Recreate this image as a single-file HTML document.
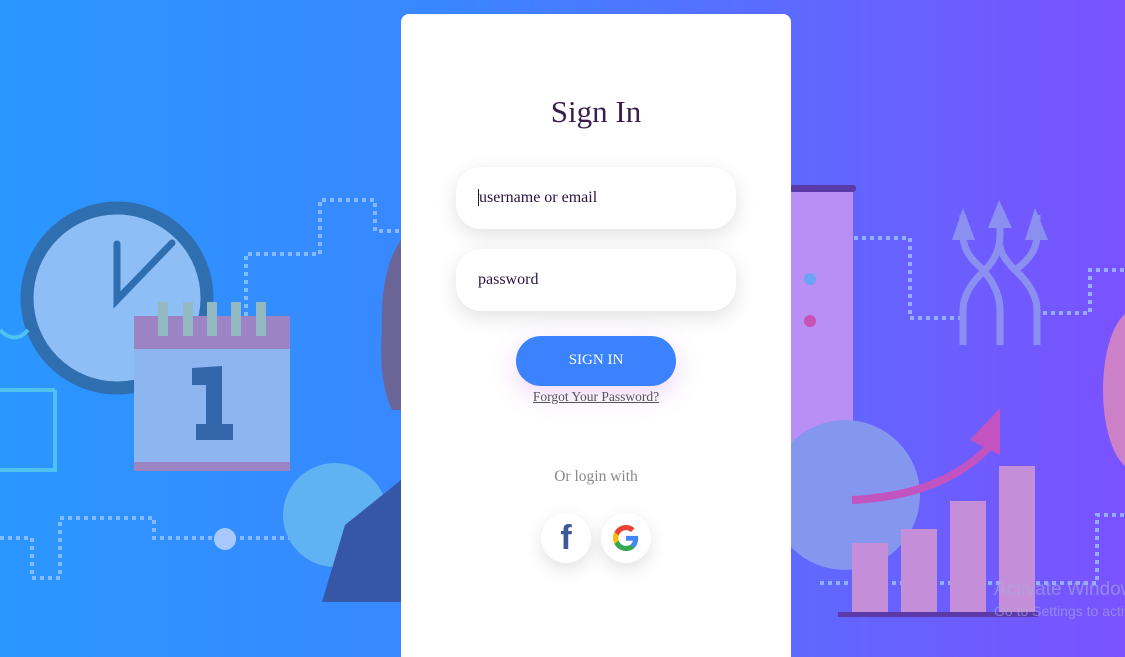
<!DOCTYPE html>
<html><head><meta charset="utf-8"><style>
*{margin:0;padding:0;box-sizing:border-box}
html{width:1125px;height:657px;overflow:hidden}
body{width:1125px;height:657px;overflow:hidden;background:linear-gradient(90deg,#2a97ff 0%,#3a86ff 40%,#6265ff 75%,#7a52ff 100%);position:relative;font-family:"Liberation Serif",serif}
svg.bg{position:absolute;left:0;top:0}
.card{position:absolute;left:401px;top:14px;width:390px;height:643px;background:#fff;border-radius:8px 8px 0 0}
h1{position:absolute;top:80px;width:100%;text-align:center;font-weight:normal;font-size:31px;color:#3a1e4e}
.inp{position:absolute;left:55px;width:280px;height:62px;border-radius:25px;background:#fff;box-shadow:0 6px 20px rgba(0,0,0,.12);font-size:16px;color:#2a1440;padding-left:22px;line-height:62px}
.btn{position:absolute;left:115px;top:322px;width:160px;height:50px;border-radius:25px;background:#3b82fe;color:#fff;font-size:15px;text-align:center;line-height:48px;box-shadow:0 8px 25px rgba(200,120,240,.3)}
.fg{position:absolute;top:375px;width:100%;text-align:center;font-size:13.5px;color:#555;text-decoration:underline}
.or{position:absolute;top:454px;width:100%;text-align:center;font-size:15.5px;color:#888}
.so{position:absolute;top:499px;width:50px;height:50px;border-radius:50%;background:#fff;box-shadow:0 6px 18px rgba(0,0,0,.12);display:flex;align-items:center;justify-content:center}
.win{position:absolute;left:994px;top:578px;width:131px;overflow:hidden;white-space:nowrap;color:rgba(170,170,220,.6);font-family:"Liberation Sans",sans-serif;font-size:19px;line-height:24px}
.win small{font-size:14px;display:block;line-height:18px}
</style></head><body>
<svg class="bg" width="1125" height="657">
<g fill="none" stroke="#9cc4ff" stroke-width="4" stroke-dasharray="4 4" opacity=".8">
<path d="M0 538 H32 V578 H60 V518 H154 V538 H420"/>
<path d="M246 420 V254 H320 V200 H375 V231 H401"/>
<path d="M790 238 H910 V318 H960"/><path d="M1035 313 H1090 V270 H1125"/>
<path d="M820 583 H1097 V515 H1125"/>
</g>
<circle cx="117" cy="298" r="90" fill="#8ebef6" stroke="#2f6fb0" stroke-width="13"/>
<path d="M117 244 V300 L172 243" fill="none" stroke="#2f6fb0" stroke-width="7" stroke-linecap="round"/>
<rect x="134" y="316" width="156" height="155" fill="#8db5f0"/>
<rect x="134" y="316" width="156" height="33" fill="#9c84c4"/>
<rect x="134" y="462" width="156" height="9" fill="#9c84c4"/>
<g fill="#92b8c2"><rect x="158" y="302" width="10" height="34"/><rect x="183" y="302" width="10" height="34"/><rect x="207" y="302" width="10" height="34"/><rect x="231" y="302" width="10" height="34"/><rect x="256" y="302" width="10" height="34"/></g>
<path d="M192 368 L222 366 V424 H233 V440 H196 V424 H206 V385 H192Z" fill="#3366aa"/>
<path d="M0 330 Q15 345 28 330 M55 390 V470 H0 M55 390 H0" fill="none" stroke="#4fc2f0" stroke-width="4"/>
<circle cx="335" cy="515" r="52" fill="#5fb3f2"/>
<circle cx="225" cy="539" r="11" fill="#a8c8ff"/>
<path d="M401 480 L345 525 L322 602 H401Z" fill="#3657a6"/>
<path d="M401 240 Q380 270 382 330 Q378 380 392 410 L401 410Z" fill="#6a6596"/>
<rect x="790" y="185" width="66" height="7" rx="3" fill="#5a3aa8"/>
<rect x="790" y="192" width="63" height="262" fill="#b98ff6"/>
<circle cx="845" cy="495" r="75" fill="#8496ee"/>
<rect x="790" y="192" width="63" height="83" fill="#b98ff6"/>
<circle cx="810" cy="279" r="6" fill="#6aa4f2"/><circle cx="810" cy="321" r="6" fill="#c754b4"/>
<g fill="none" stroke="#8b8ff0" stroke-width="7"><path d="M963 345 V310 Q963 290 985 270 Q1000 255 1000 235 V215"/><path d="M1000 345 V310 Q1000 285 975 262 Q963 250 963 235 V215"/><path d="M1037 345 V310 Q1037 290 1015 270 Q1000 255 1000 245"/><path d="M1037 215 V235 Q1037 255 1015 270"/></g>
<g fill="#8b8ff0"><path d="M952 240 L963 208 L975 240Z"/><path d="M988 228 L999 200 L1012 228Z"/><path d="M1025 240 L1035 208 L1048 240Z"/></g>
<path d="M852 500 Q950 495 995 440" fill="none" stroke="#c353c0" stroke-width="8"/>
<path d="M970 440 L1000 408 L1000 455Z" fill="#c353c0"/>
<g fill="#c48ed8"><rect x="852" y="543" width="36" height="70"/><rect x="901" y="529" width="36" height="84"/><rect x="950" y="501" width="36" height="112"/><rect x="999" y="466" width="36" height="147"/></g>
<rect x="838" y="612" width="200" height="5" fill="#5b3aa8"/>
<ellipse cx="1135" cy="390" rx="32" ry="80" fill="#cc80c8"/>
</svg>
<div class="card">
<h1>Sign In</h1>
<div class="inp" style="top:153px"><span style="border-left:1px solid #222"></span>username or email</div>
<div class="inp" style="top:235px">password</div>
<div class="btn">SIGN IN</div>
<div class="fg">Forgot Your Password?</div>
<div class="or">Or login with</div>
<div class="so" style="left:140px"><span style="font-family:'Liberation Sans',sans-serif;font-weight:bold;font-size:34px;color:#3b5998;line-height:1">f</span></div>
<div class="so" style="left:200px"><svg width="26" height="26" viewBox="0 0 48 48"><path fill="#EA4335" d="M24 9.5c3.5 0 6.6 1.2 9.1 3.6l6.8-6.8C35.8 2.4 30.3 0 24 0 14.6 0 6.6 5.4 2.6 13.3l7.9 6.2C12.4 13.7 17.7 9.5 24 9.5z"/><path fill="#4285F4" d="M46.5 24.5c0-1.6-.1-3.1-.4-4.5H24v9h12.7c-.6 2.9-2.2 5.4-4.700 7.1l7.6 5.9c4.4-4.1 6.9-10.1 6.9-17.5z"/><path fill="#FBBC05" d="M10.5 28.6c-.5-1.4-.8-3-.8-4.6s.3-3.2.8-4.6l-7.9-6.2C.9 16.5 0 20.1 0 24s.9 7.500 2.6 10.8l7.9-6.2z"/><path fill="#34A853" d="M24 48c6.5 0 11.9-2.1 15.9-5.8l-7.6-5.9c-2.1 1.4-4.9 2.3-8.300 2.3-6.3 0-11.6-4.2-13.5-10l-7.9 6.2C6.6 42.6 14.6 48 24 48z"/></svg></div>
</div>
<div class="win">Activate Windows<small>Go to Settings to activate Windows.</small></div>
</body></html>
